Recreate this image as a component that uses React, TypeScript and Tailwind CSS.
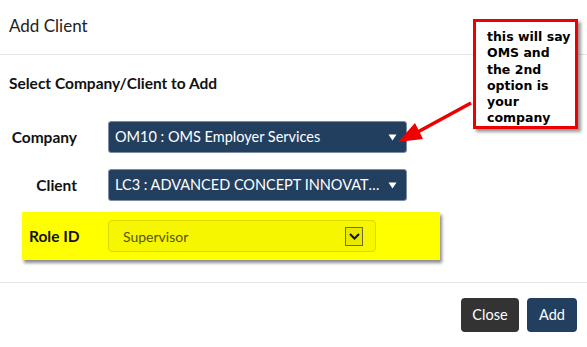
import React from 'react'

const navy = 'bg-[#233f5f]'

const DarkSelect = ({ value }: { value: string }) => (
  <div
    className={`${navy} flex items-center w-[299px] h-[32px] rounded-[3px] border border-[#7d8ea3] pl-[6px] pr-[9px] text-white text-[14.5px]`}
  >
    <span className="flex-1 truncate">{value}</span>
    <svg width="9" height="7" viewBox="0 0 9 7" className="ml-[8px] shrink-0">
      <path d="M0.5 0.5 H8.5 L4.5 6.5 Z" fill="#ffffff" />
    </svg>
  </div>
)

export default function App() {
  return (
    <div
      className="relative w-[587px] h-[347px] overflow-hidden bg-white text-[#111]"
      style={{ fontFamily: 'Lato, "Noto Sans", sans-serif' }}
    >
      <div className="h-[55px] px-[9px] flex items-center border-b border-[#e5e5e5]">
        <h1 className="text-[17px] text-[#222] -mt-[3px]">Add Client</h1>
      </div>

      <div className="h-[228px] px-[9px] border-b border-[#e5e5e5]">
        <h2 className="pt-[17px] text-[15.5px] font-bold text-[#111]">Select Company/Client to Add</h2>

        <div className="mt-[26px] flex items-center">
          <div className="w-[68px] mr-[31px] text-right text-[15.5px] font-bold">Company</div>
          <DarkSelect value="OM10 : OMS Employer Services" />
        </div>

        <div className="mt-[16px] flex items-center">
          <div className="w-[68px] mr-[31px] text-right text-[15.5px] font-bold">Client</div>
          <DarkSelect value="LC3 : ADVANCED CONCEPT INNOVATIONS LLC" />
        </div>

        <div className="mt-[11px] ml-[13px] w-[418px] h-[48px] bg-[#ffff00] flex items-center pl-[7px] shadow-[2px_3px_3px_rgba(0,0,0,0.45)]">
          <div className="w-[79px] text-[15.5px] font-bold">Role ID</div>
          <div className="w-[268px] h-[32px] rounded-[4px] border border-[#d8d800] bg-[#f6f600] flex items-center pl-[14px] pr-[12px]">
            <span className="flex-1 text-[14px] text-[#55550a]">Supervisor</span>
            <div className="w-[18px] h-[19px] border border-[#6b6b30] bg-[#e9e900] flex items-center justify-center">
              <svg width="11" height="7" viewBox="0 0 11 7">
                <path d="M1 1 L5.5 5.5 L10 1" stroke="#111" strokeWidth="2" fill="none" />
              </svg>
            </div>
          </div>
        </div>
      </div>

      <div className="flex justify-end gap-[8px] pr-[10px] pt-[15px]">
        <button className="w-[58px] h-[34px] rounded-[4px] bg-[#333333] text-white text-[14.5px]">Close</button>
        <button className="w-[50px] h-[34px] rounded-[4px] bg-[#233f5f] text-white text-[14.5px]">Add</button>
      </div>

      {/* annotation callout */}
      <div
        className="absolute left-[473px] top-[19px] w-[105px] h-[110px] border-[3px] border-[#ee0000] bg-white pl-[11px] pt-[7px] shadow-[3px_3px_3px_rgba(0,0,0,0.4)] text-[12.5px] leading-[16.3px] font-bold text-black"
        style={{ fontFamily: '"DejaVu Sans", Verdana, sans-serif' }}
      >
        this will say OMS and the 2nd option is your company
      </div>
      <svg className="absolute left-0 top-0" width="587" height="347">
        <line x1="471" y1="103" x2="414" y2="134" stroke="#ee0000" strokeWidth="3.5" />
        <polygon points="398,142 415,123 423,139" fill="#ee0000" />
      </svg>
    </div>
  )
}
